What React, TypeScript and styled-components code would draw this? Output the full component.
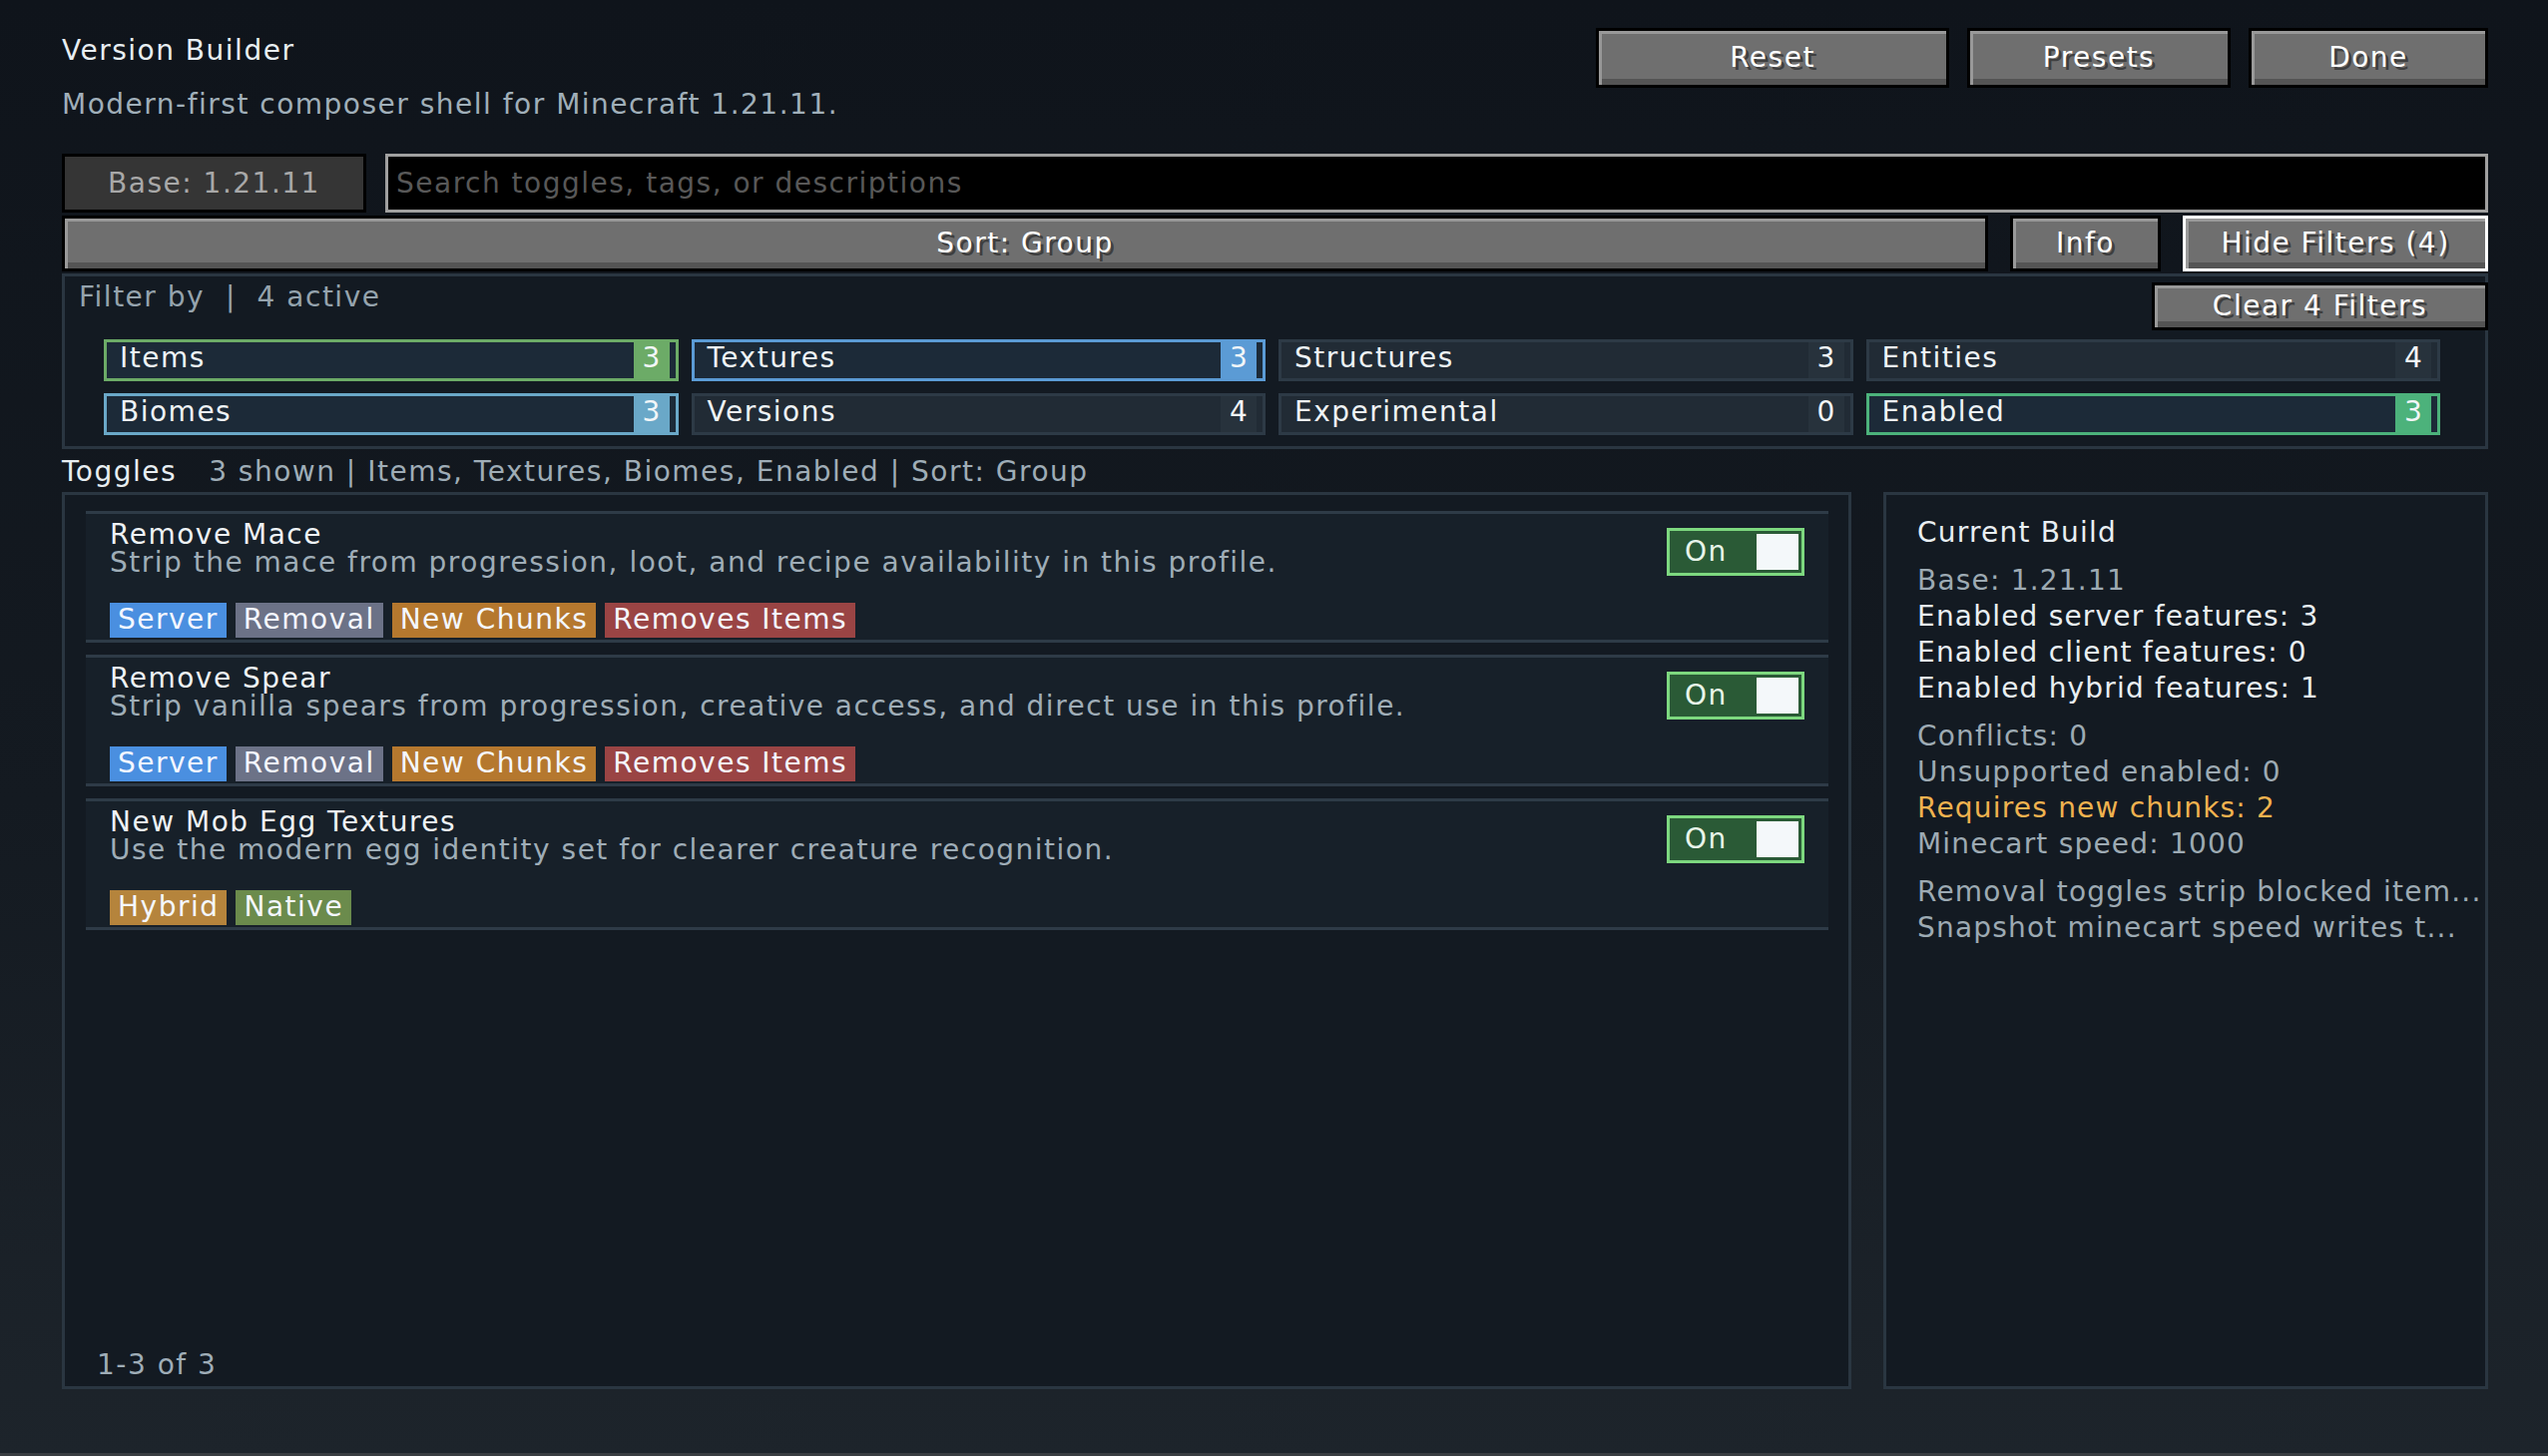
import React from "react";
import styled, { createGlobalStyle } from "styled-components";

const GlobalStyle = createGlobalStyle`
  html, body { margin: 0; padding: 0; }
  * { box-sizing: border-box; }
  body {
    background: linear-gradient(180deg, #0f141b 0%, #141a21 55%, #1d242b 100%);
    font-family: "DejaVu Sans", "Liberation Sans", sans-serif;
    font-size: 28px;
    letter-spacing: 1.5px;
    line-height: 36px;
    color: #e8eef2;
  }
`;

const Page = styled.div`
  height: 100vh;
  min-height: 1459px;
  display: flex;
  flex-direction: column;
  padding: 28px 60px 64px 62px;
  border-bottom: 3px solid #393d41;
`;

const Header = styled.header`
  display: flex;
  justify-content: space-between;
  align-items: flex-start;
`;

const TitleBlock = styled.div`
  margin-top: 5px;
  display: flex;
  flex-direction: column;
  gap: 18px;
`;

const Title = styled.h1`
  margin: 0;
  font: inherit;
  letter-spacing: inherit;
  color: #e8eef2;
`;

const Subtitle = styled.p`
  margin: 0;
  color: #a0afb9;
`;

const HeaderActions = styled.div`
  display: flex;
  gap: 18px;
`;

const McButton = styled.button<{ $w?: number; $h?: number; $focused?: boolean }>`
  flex: ${(p) => (p.$w ? "0 0 auto" : "1 1 auto")};
  width: ${(p) => (p.$w ? `${p.$w}px` : "auto")};
  height: ${(p) => p.$h ?? 60}px;
  border: 3px solid ${(p) => (p.$focused ? "#ffffff" : "#000000")};
  background: #6f6f6f;
  box-shadow: inset 3px 3px 0 #999999, inset 0 -6px 0 #545454;
  color: #ffffff;
  font: inherit;
  letter-spacing: inherit;
  line-height: 36px;
  text-shadow: 3px 3px 0 #3e3e3e;
  padding: 0;
  display: flex;
  align-items: center;
  justify-content: center;
  cursor: pointer;
`;

const BaseButton = styled.div`
  flex: 0 0 305px;
  height: 59px;
  border: 3px solid #000000;
  background: #353535;
  color: #a8a8a8;
  display: flex;
  align-items: center;
  justify-content: center;
`;

const SearchInput = styled.input`
  flex: 1;
  height: 59px;
  border: 3px solid #a0a0a0;
  background: #000000;
  color: #e0e0e0;
  font: inherit;
  letter-spacing: inherit;
  padding: 0 8px;
  outline: none;
  &::placeholder {
    color: #585858;
  }
`;

const ControlRow = styled.div<{ $top: number; $gap: number }>`
  display: flex;
  gap: ${(p) => p.$gap}px;
  margin-top: ${(p) => p.$top}px;
`;

const FilterPanel = styled.section`
  margin-top: 2px;
  border: 3px solid #2a3641;
  background: #131a22;
  padding: 3px 0 11px 14px;
`;

const FilterHeader = styled.div`
  display: flex;
  justify-content: space-between;
  align-items: flex-start;
`;

const FilterSummary = styled.div`
  color: #95a3ad;
  white-space: pre;
`;

const ClearWrap = styled.div`
  margin-top: 3px;
  margin-right: -3px;
  display: flex;
`;

const ChipGrid = styled.div`
  display: grid;
  grid-template-columns: repeat(4, minmax(0, 1fr));
  column-gap: 13px;
  row-gap: 12px;
  margin: 9px 45px 0 25px;
`;

const Chip = styled.div<{ $accent?: string }>`
  height: 42px;
  display: flex;
  border: 3px solid ${(p) => p.$accent ?? "#2d3a46"};
  background: ${(p) => (p.$accent ? "#1c2a38" : "#212b35")};
  padding-right: 6px;
  line-height: 32px;
`;

const ChipLabel = styled.span`
  flex: 1;
  padding-left: 13px;
  color: #eef3f6;
`;

const ChipCount = styled.span<{ $accent?: string }>`
  width: 36px;
  text-align: center;
  background: ${(p) => p.$accent ?? "#27323c"};
  color: #f2f6f8;
  letter-spacing: 0;
`;

const ToggleHeading = styled.div`
  margin-top: 5px;
  display: flex;
  gap: 32px;
`;

const HeadingLabel = styled.span`
  color: #e8eef2;
`;

const HeadingMeta = styled.span`
  color: #9fadb7;
`;

const Main = styled.div`
  flex: 1;
  margin-top: 2px;
  display: grid;
  grid-template-columns: 1793px minmax(0, 1fr);
  gap: 32px;
  min-height: 0;
`;

const ListPanel = styled.section`
  border: 3px solid #2a3641;
  background: #131a22;
  padding: 16px 20px 3px 21px;
  display: flex;
  flex-direction: column;
  min-width: 0;
`;

const RowList = styled.div`
  display: flex;
  flex-direction: column;
  gap: 12px;
`;

const Row = styled.div`
  display: flex;
  border-top: 3px solid #2e3b47;
  border-bottom: 3px solid #2e3b47;
  background: #172029;
  padding: 7px 24px 2px 24px;
`;

const RowBody = styled.div`
  flex: 1;
  min-width: 0;
`;

const RowTitle = styled.div`
  line-height: 28px;
  color: #eef2f5;
`;

const RowDesc = styled.div`
  line-height: 28px;
  color: #9fadb7;
  white-space: nowrap;
`;

const TagRow = styled.div`
  display: flex;
  gap: 9px;
  margin-top: 26px;
`;

const Tag = styled.span<{ $bg: string }>`
  height: 35px;
  line-height: 34px;
  padding: 0 8px;
  background: ${(p) => p.$bg};
  color: #f4f7ff;
  white-space: nowrap;
`;

const Toggle = styled.div`
  flex-shrink: 0;
  width: 138px;
  height: 48px;
  margin-top: 7px;
  border: 3px solid #7dd87f;
  background: #2a5a36;
  display: flex;
  align-items: center;
  justify-content: space-between;
  padding: 0 3px 0 15px;
`;

const ToggleLabel = styled.span`
  color: #e8f5ea;
  line-height: 40px;
`;

const Knob = styled.span`
  width: 42px;
  height: 36px;
  background: #f4f8fa;
`;

const ListFooter = styled.div`
  margin-top: auto;
  padding-left: 11px;
  color: #9fadb7;
`;

const SidePanel = styled.aside`
  border: 3px solid #2a3641;
  background: #131a22;
  padding: 20px 20px 0 31px;
  display: flex;
  flex-direction: column;
  gap: 12px;
  min-width: 0;
  overflow: hidden;
`;

const SideGroup = styled.div`
  display: flex;
  flex-direction: column;
`;

const SideLine = styled.div<{ $tone: "strong" | "muted" | "warn" }>`
  white-space: nowrap;
  letter-spacing: 1.2px;
  color: ${(p) =>
    p.$tone === "strong" ? "#e9eff2" : p.$tone === "warn" ? "#f0b24f" : "#9daab3"};
`;

type Filter = { label: string; count: number; accent?: string };

const filters: Filter[] = [
  { label: "Items", count: 3, accent: "#6cab67" },
  { label: "Textures", count: 3, accent: "#5b9bd5" },
  { label: "Structures", count: 3 },
  { label: "Entities", count: 4 },
  { label: "Biomes", count: 3, accent: "#6aa8c8" },
  { label: "Versions", count: 4 },
  { label: "Experimental", count: 0 },
  { label: "Enabled", count: 3, accent: "#4cb27b" },
];

const TAG_COLORS: Record<string, string> = {
  Server: "#4a8fe0",
  Removal: "#6c7287",
  "New Chunks": "#b5782e",
  "Removes Items": "#9a4444",
  Hybrid: "#b5843c",
  Native: "#6b8b4c",
};

const toggles = [
  {
    title: "Remove Mace",
    desc: "Strip the mace from progression, loot, and recipe availability in this profile.",
    tags: ["Server", "Removal", "New Chunks", "Removes Items"],
  },
  {
    title: "Remove Spear",
    desc: "Strip vanilla spears from progression, creative access, and direct use in this profile.",
    tags: ["Server", "Removal", "New Chunks", "Removes Items"],
  },
  {
    title: "New Mob Egg Textures",
    desc: "Use the modern egg identity set for clearer creature recognition.",
    tags: ["Hybrid", "Native"],
  },
];

type Line = { text: string; tone: "strong" | "muted" | "warn" };

const summary: Line[][] = [
  [{ text: "Current Build", tone: "strong" }],
  [
    { text: "Base: 1.21.11", tone: "muted" },
    { text: "Enabled server features: 3", tone: "strong" },
    { text: "Enabled client features: 0", tone: "strong" },
    { text: "Enabled hybrid features: 1", tone: "strong" },
  ],
  [
    { text: "Conflicts: 0", tone: "muted" },
    { text: "Unsupported enabled: 0", tone: "muted" },
    { text: "Requires new chunks: 2", tone: "warn" },
    { text: "Minecart speed: 1000", tone: "muted" },
  ],
  [
    { text: "Removal toggles strip blocked item...", tone: "muted" },
    { text: "Snapshot minecart speed writes t...", tone: "muted" },
  ],
];

export default function App() {
  return (
    <>
      <GlobalStyle />
      <Page>
        <Header>
          <TitleBlock>
            <Title>Version Builder</Title>
            <Subtitle>Modern-first composer shell for Minecraft 1.21.11.</Subtitle>
          </TitleBlock>
          <HeaderActions>
            <McButton $w={354}>Reset</McButton>
            <McButton $w={264}>Presets</McButton>
            <McButton $w={240}>Done</McButton>
          </HeaderActions>
        </Header>

        <ControlRow $top={31} $gap={19}>
          <BaseButton>Base: 1.21.11</BaseButton>
          <SearchInput placeholder="Search toggles, tags, or descriptions" />
        </ControlRow>

        <ControlRow $top={3} $gap={22}>
          <McButton $h={56}>Sort: Group</McButton>
          <McButton $w={151} $h={56}>Info</McButton>
          <McButton $w={306} $h={56} $focused>
            Hide Filters (4)
          </McButton>
        </ControlRow>

        <FilterPanel>
          <FilterHeader>
            <FilterSummary>{"Filter by  |  4 active"}</FilterSummary>
            <ClearWrap>
              <McButton $w={337} $h={48}>Clear 4 Filters</McButton>
            </ClearWrap>
          </FilterHeader>
          <ChipGrid>
            {filters.map((f) => (
              <Chip key={f.label} $accent={f.accent}>
                <ChipLabel>{f.label}</ChipLabel>
                <ChipCount $accent={f.accent}>{f.count}</ChipCount>
              </Chip>
            ))}
          </ChipGrid>
        </FilterPanel>

        <ToggleHeading>
          <HeadingLabel>Toggles</HeadingLabel>
          <HeadingMeta>3 shown | Items, Textures, Biomes, Enabled | Sort: Group</HeadingMeta>
        </ToggleHeading>

        <Main>
          <ListPanel>
            <RowList>
              {toggles.map((t) => (
                <Row key={t.title}>
                  <RowBody>
                    <RowTitle>{t.title}</RowTitle>
                    <RowDesc>{t.desc}</RowDesc>
                    <TagRow>
                      {t.tags.map((tag) => (
                        <Tag key={tag} $bg={TAG_COLORS[tag]}>
                          {tag}
                        </Tag>
                      ))}
                    </TagRow>
                  </RowBody>
                  <Toggle>
                    <ToggleLabel>On</ToggleLabel>
                    <Knob />
                  </Toggle>
                </Row>
              ))}
            </RowList>
            <ListFooter>1-3 of 3</ListFooter>
          </ListPanel>

          <SidePanel>
            {summary.map((group, i) => (
              <SideGroup key={i}>
                {group.map((l) => (
                  <SideLine key={l.text} $tone={l.tone}>
                    {l.text}
                  </SideLine>
                ))}
              </SideGroup>
            ))}
          </SidePanel>
        </Main>
      </Page>
    </>
  );
}
